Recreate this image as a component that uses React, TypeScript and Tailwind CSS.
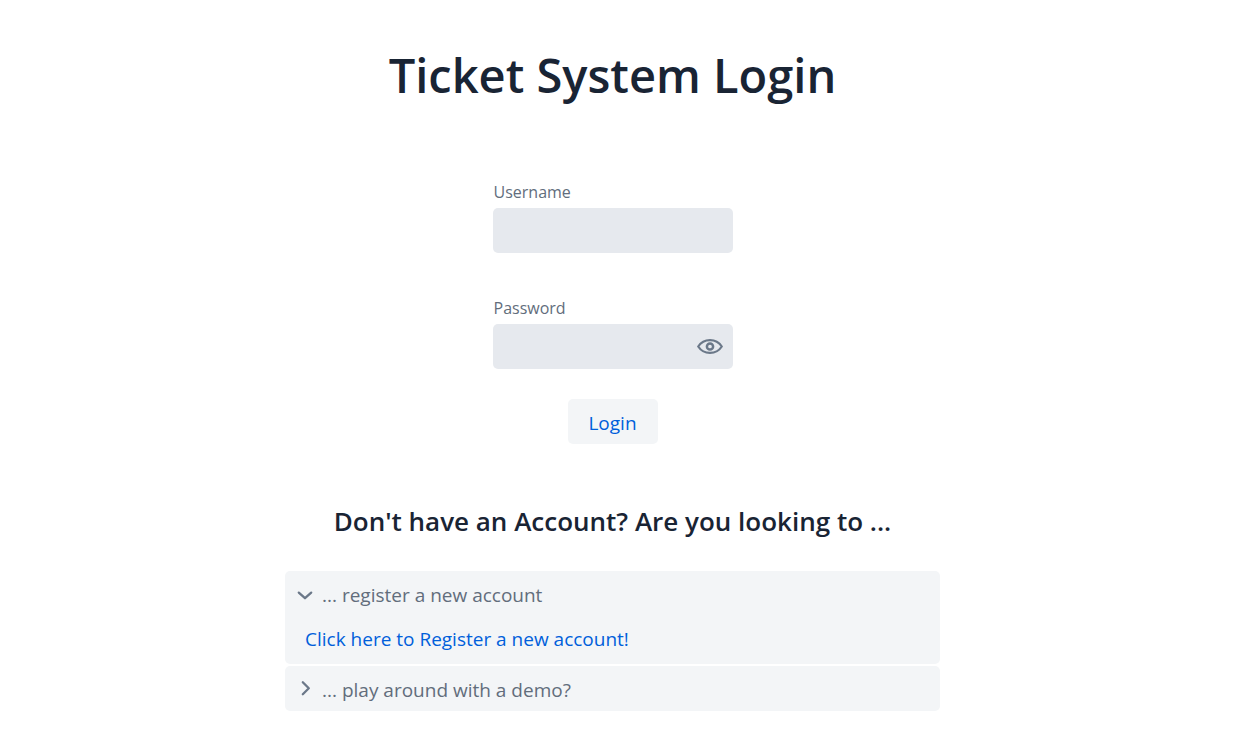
import { useState } from "react";
import type { ReactNode } from "react";

type FieldProps = {
  id: string;
  label: string;
  type: string;
  autoComplete: string;
  children?: ReactNode;
};

function Field({ id, label, type, autoComplete, children }: FieldProps) {
  return (
    <div className="flex w-60 flex-col">
      <label htmlFor={id} className="px-px pt-[2px] pb-[2px] text-[16px] leading-7 text-[#626d7c]">
        {label}
      </label>
      <div className="flex h-[45px] items-center rounded-[5px] bg-[#e6e9ee]">
        <input
          id={id}
          name={id}
          type={type}
          autoComplete={autoComplete}
          className="h-full w-full min-w-0 flex-1 rounded-[5px] bg-transparent px-3 text-[19px] text-[#192434] outline-none"
        />
        {children}
      </div>
    </div>
  );
}

function EyeIcon() {
  return (
    <svg width="26" height="16" viewBox="0 0 26 16" fill="none" stroke="#6b7889" strokeWidth="2.2" aria-hidden="true">
      <path d="M1.2 7.5C4 3.2 8.2 1.1 13 1.1S22 3.2 24.8 7.5C22 11.8 17.8 13.9 13 13.9S4 11.8 1.2 7.5Z" strokeLinejoin="round" />
      <circle cx="13" cy="7.5" r="3.1" strokeWidth="2.5" />
    </svg>
  );
}

function Chevron({ open }: { open: boolean }) {
  return (
    <svg
      width="16"
      height="16"
      viewBox="0 0 16 16"
      fill="none"
      stroke="#6b7889"
      strokeWidth="2.3"
      strokeLinecap="round"
      strokeLinejoin="round"
      aria-hidden="true"
      className="overflow-visible"
    >
      <path d={open ? "M1.8 4.6L8 10.2L14.2 4.6" : "M5.8 -0.8L11.8 5.2L5.8 11.2"} />
    </svg>
  );
}

type PanelProps = { title: string; open: boolean; onToggle: () => void; children: ReactNode };

function Panel({ title, open, onToggle, children }: PanelProps) {
  return (
    <section className="rounded-[5px] bg-[#f3f5f7] text-[19px]">
      <button
        type="button"
        aria-expanded={open}
        onClick={onToggle}
        className="flex h-[45px] w-full items-center gap-[9px] px-3 pt-1 text-left text-[#626d7c]"
      >
        <Chevron open={open} />
        <span>{title}</span>
      </button>
      {open && <div className="px-5 pt-2 pb-[10px] leading-[30px]">{children}</div>}
    </section>
  );
}

export default function App() {
  const [showPassword, setShowPassword] = useState(false);
  const [registerOpen, setRegisterOpen] = useState(true);
  const [demoOpen, setDemoOpen] = useState(false);

  return (
    <main className="flex min-h-screen flex-col items-center bg-white pt-10 pr-7 pb-5 font-['Open_Sans','Noto_Sans',sans-serif]">
      <h1 className="text-center text-[47px] leading-[70px] font-semibold text-[#192434]">Ticket System Login</h1>

      <form className="mt-[66px] flex flex-col items-center" onSubmit={(event) => event.preventDefault()}>
        <Field id="username" label="Username" type="text" autoComplete="username" />
        <div className="h-[39px]" />
        <Field
          id="password"
          label="Password"
          type={showPassword ? "text" : "password"}
          autoComplete="current-password"
        >
          <button
            type="button"
            aria-label="Show password"
            aria-pressed={showPassword}
            onClick={() => setShowPassword(!showPassword)}
            className="mr-[10px] shrink-0"
          >
            <EyeIcon />
          </button>
        </Field>
        <button
          type="submit"
          className="mt-[30px] h-[45px] min-w-[90px] rounded-[5px] bg-[#f3f5f7] px-5 pt-1 text-[19px] text-[#005fdb]"
        >
          Login
        </button>
      </form>

      <h2 className="mt-[57px] text-center text-[26px] leading-10 font-semibold text-[#192434]">
        Don't have an Account? Are you looking to ...
      </h2>

      <div className="mt-[30px] flex w-full max-w-[655px] flex-col gap-[2px]">
        <Panel title="... register a new account" open={registerOpen} onToggle={() => setRegisterOpen(!registerOpen)}>
          <a href="#register" className="text-[#005fdb]">
            Click here to Register a new account!
          </a>
        </Panel>
        <Panel title="... play around with a demo?" open={demoOpen} onToggle={() => setDemoOpen(!demoOpen)}>
          <a href="#demo" className="text-[#005fdb]">
            Click here to open the demo!
          </a>
        </Panel>
      </div>
    </main>
  );
}
